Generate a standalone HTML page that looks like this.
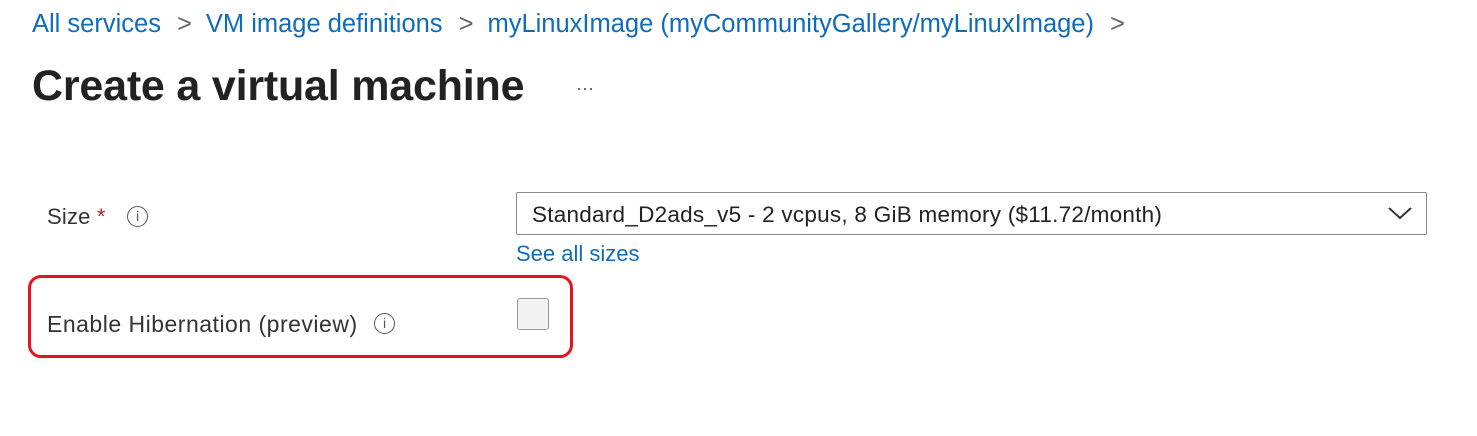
<!DOCTYPE html>
<html><head><style>
body{margin:0;width:1477px;height:436px;background:#fff;font-family:"Liberation Sans",sans-serif;position:relative;overflow:hidden}
.a{position:absolute;white-space:nowrap}
.bc{top:10px;left:32px;font-size:25.5px;color:#0f6cbd;letter-spacing:0px}
.bc span.s{color:#666;margin:0 14px 0 16px}
.t{top:62px;left:32px;font-size:43px;font-weight:bold;color:#222;letter-spacing:-0.2px}
.lab{font-size:22px;color:#333;letter-spacing:0.5px}
.info{position:absolute;width:21px;height:21px;border:1.5px solid #555;border-radius:50%;box-sizing:border-box;text-align:center;font-size:14px;line-height:18px;color:#555;font-family:"Liberation Sans",sans-serif}
</style></head><body>
<div class="a bc">All services<span class="s">&gt;</span>VM image definitions<span class="s">&gt;</span>myLinuxImage (myCommunityGallery/myLinuxImage)<span class="s">&gt;</span></div>
<div class="a t">Create a virtual machine</div>
<div class="a" style="top:78px;left:576px;font-size:18px;color:#555">···</div>
<div class="a lab" style="top:204px;left:47px;letter-spacing:0.2px">Size <span style="color:#a4262c">*</span></div>
<div class="a info" style="left:127px;top:206px">i</div>
<div class="a" style="left:516px;top:192px;width:911px;height:43px;border:1px solid #888;box-sizing:border-box;border-radius:2px"></div>
<div class="a" style="left:532px;top:202px;font-size:22.5px;color:#222;letter-spacing:0.25px">Standard_D2ads_v5 - 2 vcpus, 8 GiB memory ($11.72/month)</div>
<svg class="a" style="left:1387px;top:204px" width="26" height="18"><path d="M2 4 L13 14 L24 4" fill="none" stroke="#333" stroke-width="2"/></svg>
<div class="a" style="left:516px;top:241px;font-size:22px;color:#0f6cbd">See all sizes</div>
<div class="a" style="left:28px;top:275px;width:545px;height:83px;border:3px solid #e3131f;border-radius:13px;box-sizing:border-box"></div>
<div class="a lab" style="top:311px;left:47px;font-size:23px">Enable Hibernation (preview)</div>
<div class="a info" style="left:374px;top:313px">i</div>
<div class="a" style="left:517px;top:298px;width:32px;height:32px;border:1.5px solid #999;background:#f3f3f3;border-radius:3px;box-sizing:border-box"></div>
</body></html>
